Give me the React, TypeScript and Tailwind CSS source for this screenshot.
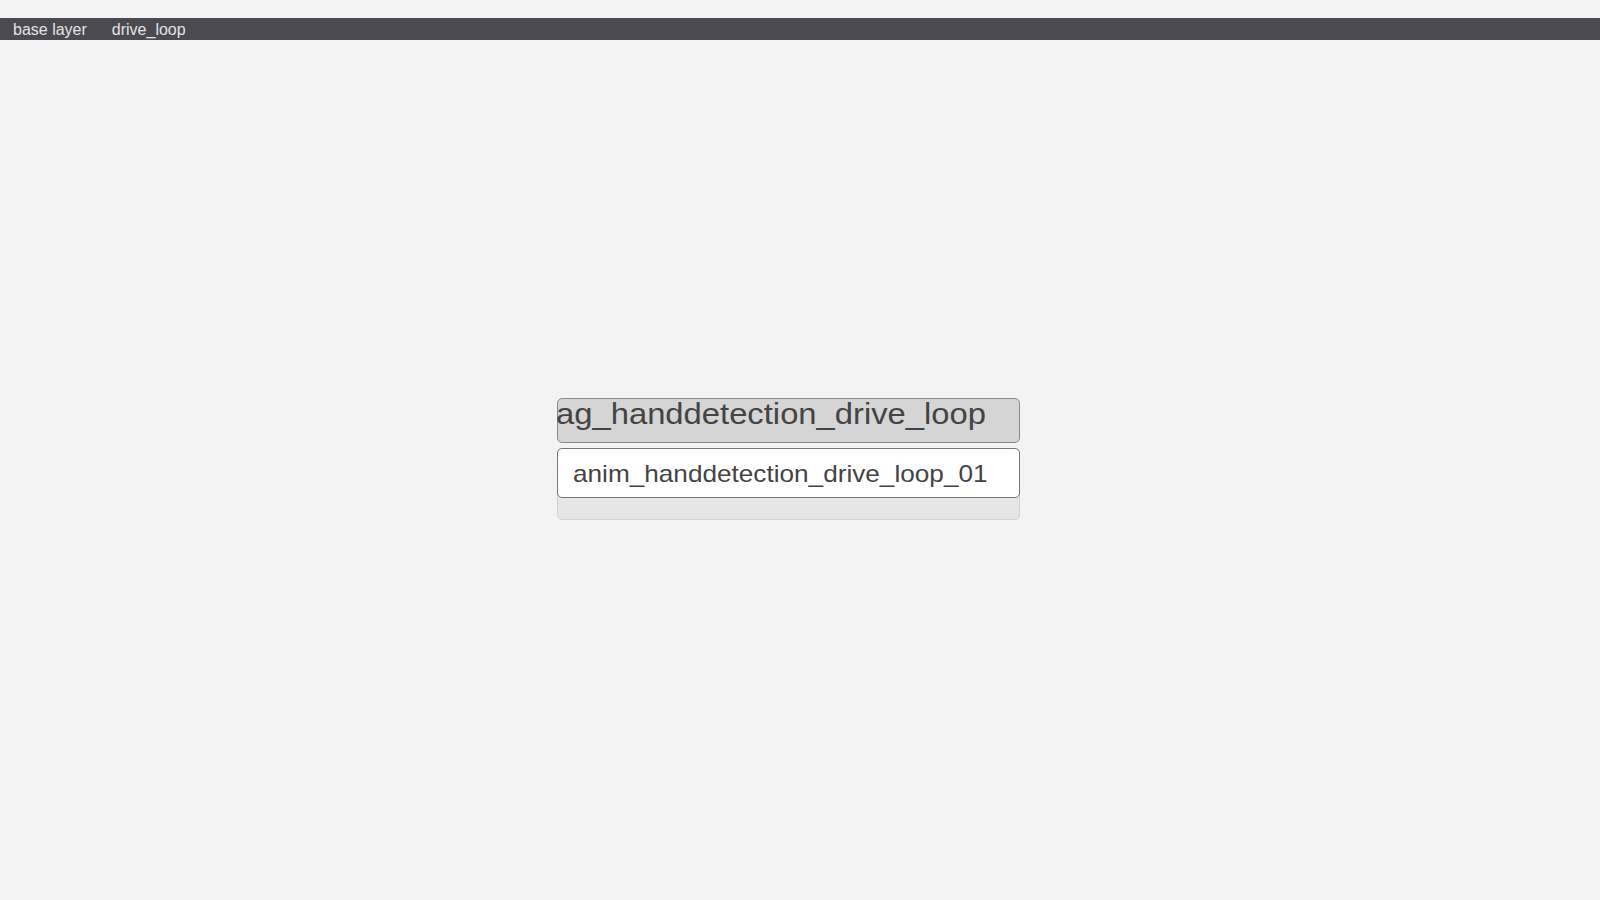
import React from "react";

const font = { fontFamily: '"Liberation Sans", Arial, sans-serif' };

export default function App() {
  return (
    <div className="relative w-[1600px] h-[900px] bg-[#f3f3f3] overflow-hidden" style={font}>
      <div className="h-[18px]" />
      {/* layer breadcrumb bar */}
      <div className="h-[22px] bg-[#4b4a50] flex items-center pl-[13px] pt-[2px] gap-[25px] text-[16px] leading-none text-[#e4e4e6]">
        <span>base layer</span>
        <span>drive_loop</span>
      </div>

      {/* state node on the graph canvas */}
      <div className="absolute left-[557px] top-[398px] w-[463px] flex flex-col gap-[5px]">
        <div className="h-[45px] rounded-[5px] border-[1.5px] border-[#8a8a8a] bg-[#d5d5d5] relative">
          <span className="absolute left-[-2px] top-[-7px] text-[29px] leading-[45px] text-[#444] whitespace-nowrap origin-left scale-x-[1.13]">
            ag_handdetection_drive_loop
          </span>
        </div>
        <div className="rounded-[5px] border border-[#d2d2d2] bg-[#e6e6e6] h-[72px]">
          <div className="-m-px h-[50px] rounded-[5px] border-[1.5px] border-[#767676] bg-white flex items-center pl-[15px] pt-[1px]">
            <span className="text-[24px] leading-none text-[#444] whitespace-nowrap origin-left scale-x-[1.09]">
              anim_handdetection_drive_loop_01
            </span>
          </div>
        </div>
      </div>
    </div>
  );
}
